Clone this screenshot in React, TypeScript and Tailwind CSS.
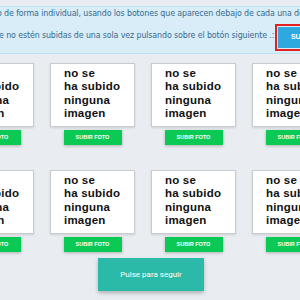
const slots = [0, 1, 2, 3];

function PhotoSlot() {
  return (
    <div className="flex w-[85px] shrink-0 flex-col items-center">
      <div className="h-[64px] w-[85px] border border-[#c9cccf] bg-white pl-[13px] pt-[3px] shadow-[0_1px_2px_rgba(0,0,0,0.12)]">
        <p className="font-['Liberation_Sans',Arial,sans-serif] text-[11.5px] font-bold leading-[13.4px] tracking-[0.2px] text-[#111]">
          no se
          <br />
          ha subido
          <br />
          ninguna
          <br />
          imagen
        </p>
      </div>
      <button className="mt-[3px] flex h-[15px] w-[58px] items-center justify-center bg-[#0bc955] font-['Liberation_Sans',Arial,sans-serif] text-[5.5px] font-semibold uppercase text-white shadow-[0_1px_3px_rgba(0,0,0,0.25)]">
        Subir foto
      </button>
    </div>
  );
}

function SlotRow() {
  return (
    <div className="-ml-[51px] flex gap-x-[16px]">
      {slots.map((s) => (
        <PhotoSlot key={s} />
      ))}
    </div>
  );
}

export default function App() {
  return (
    <div className="h-[300px] w-[300px] overflow-hidden bg-[#e9ecf0]">
      {/* info box */}
      <div className="mt-[6px] h-[48px] border-y border-[#bfe3f4] bg-[#d9edf8] font-['Liberation_Sans_Narrow','DejaVu_Sans_Condensed',sans-serif] text-[8.8px] tracking-[-0.12px] text-[#36698f]">
        <div className="-ml-[3px] whitespace-nowrap pt-[1px] leading-[10px]">
          o de forma individual, usando los botones que aparecen debajo de cada una de ellas, o bien
        </div>
        <div className="mt-[6px] flex items-start">
          <div className="-ml-[1px] mt-[6px] w-[276px] shrink-0 whitespace-nowrap leading-[10px]">
            e no estén subidas de una sola vez pulsando sobre el botón siguiente .:
          </div>
          <div className="h-[27px] w-[60px] shrink-0 border-2 border-[#e32020] p-[1px]">
            <div className="flex h-full w-[80px] items-center whitespace-nowrap bg-[#2ea9e0] pl-[13px] font-['Liberation_Sans',Arial,sans-serif] text-[7px] font-bold uppercase text-white">
              Subir todas
            </div>
          </div>
        </div>
      </div>

      <div className="mt-[9px]">
        <SlotRow />
      </div>
      <div className="mt-[25px]">
        <SlotRow />
      </div>

      <button className="ml-[98px] mt-[6px] flex h-[33px] w-[106px] items-center justify-center bg-[#2bbaa8] font-['Liberation_Sans_Narrow','Roboto',sans-serif] text-[8px] text-white shadow-[0_2px_4px_rgba(0,0,0,0.25)]">
        Pulse para seguir
      </button>
    </div>
  );
}
